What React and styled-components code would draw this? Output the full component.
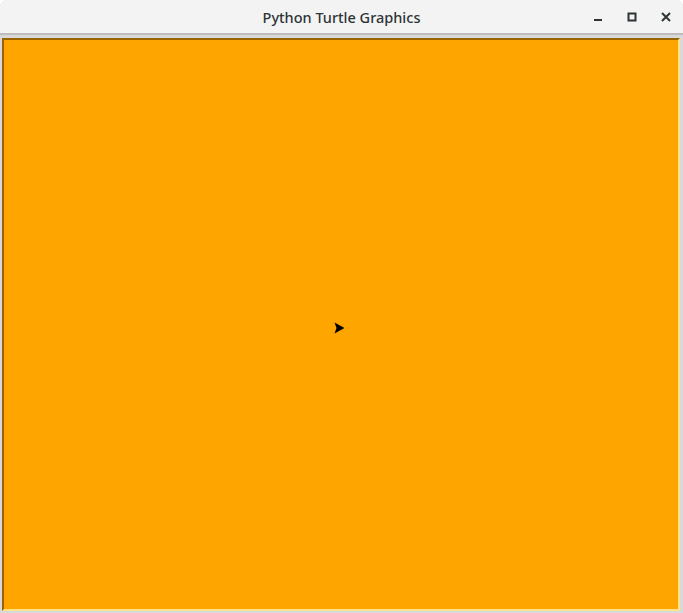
import React from 'react';
import styled, { createGlobalStyle } from 'styled-components';

const GlobalStyle = createGlobalStyle`
  html, body {
    margin: 0;
    padding: 0;
    background: #ffffff;
  }
`;

const Window = styled.div`
  width: 683px;
  height: 613px;
  display: flex;
  flex-direction: column;
  background: #d9d9d9;
  border-radius: 7px 7px 0 0;
  overflow: hidden;
`;

const TitleBar = styled.div`
  height: 33px;
  flex: none;
  display: flex;
  align-items: center;
  position: relative;
  background: #f3f3f3;
  border-bottom: 2px solid #bdbdbd;
  font-family: 'Noto Sans', 'DejaVu Sans', sans-serif;
`;

const Title = styled.div`
  flex: 1;
  text-align: center;
  font-size: 14.5px;
  font-weight: 500;
  color: #2e3436;
  padding-top: 1px;
`;

const Controls = styled.div`
  position: absolute;
  right: 7px;
  top: 0;
  height: 33px;
  display: flex;
  align-items: center;
  gap: 14px;
`;

const ControlButton = styled.div`
  width: 20px;
  height: 20px;
  display: flex;
  align-items: center;
  justify-content: center;
  color: #2e3436;
`;

const Body = styled.div`
  flex: 1;
  padding: 3px 3px 2px 2px;
  display: flex;
`;

const Canvas = styled.div`
  flex: 1;
  position: relative;
  background: #ffa500;
  border-style: solid;
  border-width: 2px;
  border-color: #996300 #ffe28a #ffe28a #996300;
`;

const Turtle = styled.svg`
  position: absolute;
  left: 328px;
  top: 281px;
`;

export default function App() {
  return (
    <>
      <GlobalStyle />
      <Window>
        <TitleBar>
          <Title>Python Turtle Graphics</Title>
          <Controls>
            <ControlButton>
              <svg width="10" height="10" viewBox="0 0 10 10">
                <rect x="1" y="7" width="8" height="2" fill="currentColor" />
              </svg>
            </ControlButton>
            <ControlButton>
              <svg width="10" height="10" viewBox="0 0 10 10">
                <rect x="1.5" y="1.5" width="7" height="7" fill="none" stroke="currentColor" strokeWidth="2" />
              </svg>
            </ControlButton>
            <ControlButton>
              <svg width="10" height="10" viewBox="0 0 10 10">
                <path d="M1 1 L9 9 M9 1 L1 9" stroke="currentColor" strokeWidth="2" />
              </svg>
            </ControlButton>
          </Controls>
        </TitleBar>
        <Body>
          <Canvas>
            <Turtle width="14" height="14" viewBox="-7 -7 14 14">
              <polygon points="5.5,0 -4.5,-5.5 -2.5,0 -4.5,5.5" fill="#000" />
            </Turtle>
          </Canvas>
        </Body>
      </Window>
    </>
  );
}
